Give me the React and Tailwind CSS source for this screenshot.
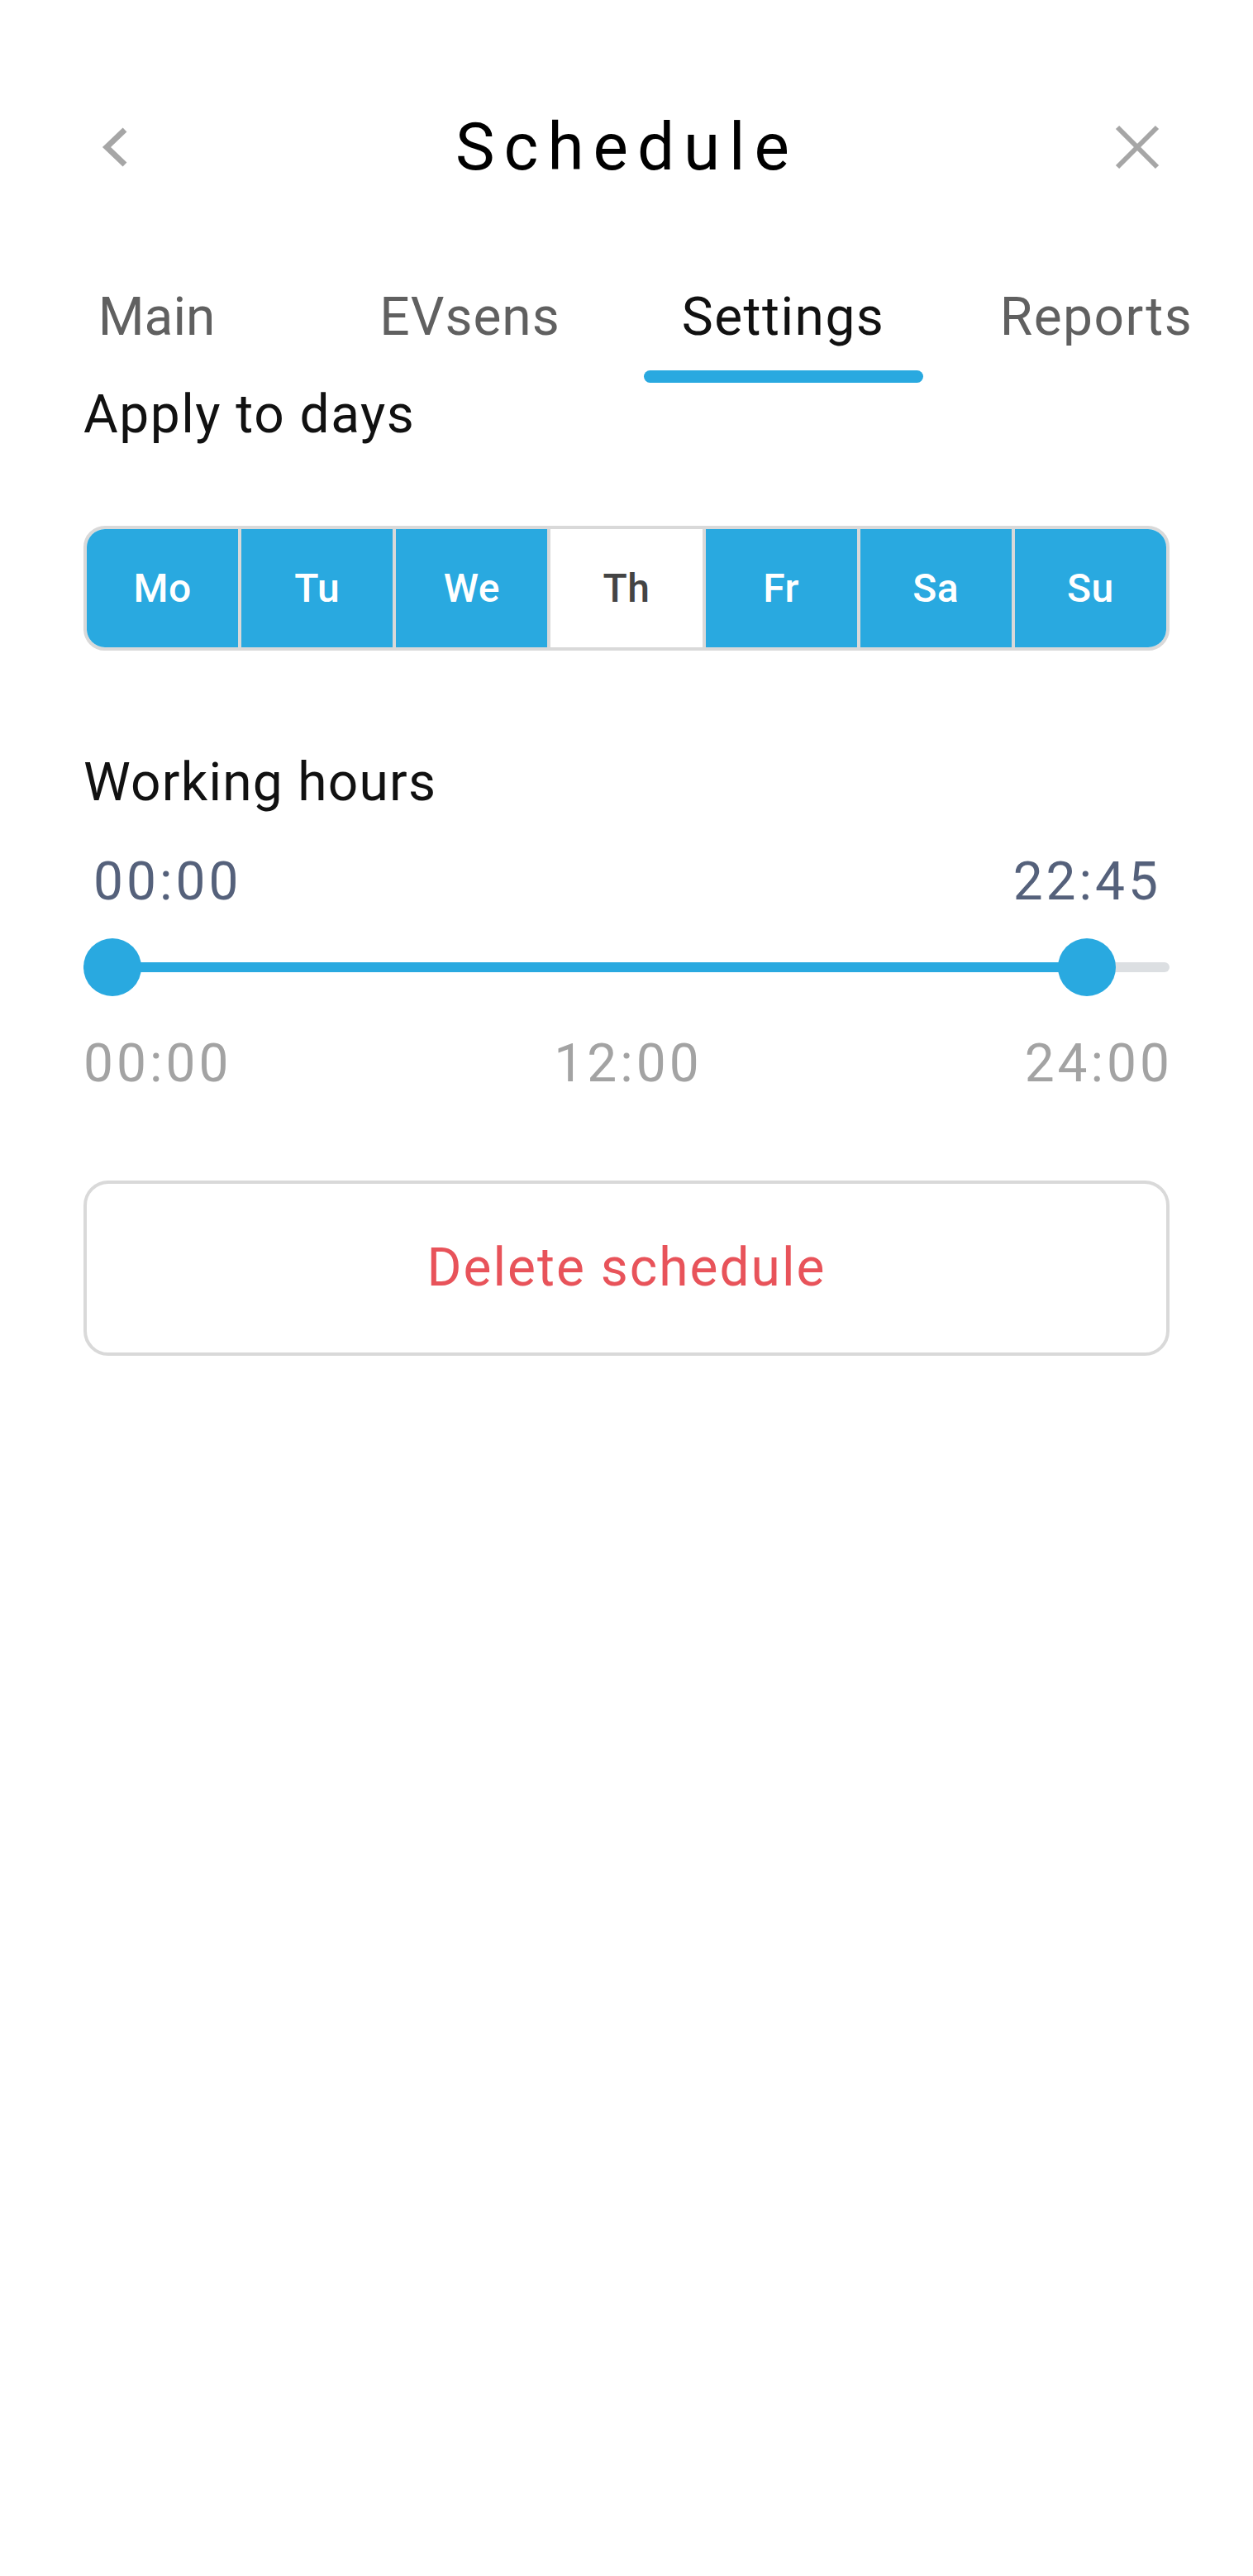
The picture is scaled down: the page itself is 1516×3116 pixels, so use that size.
import React from "react";

const days = [
  { d: "Mo", on: true },
  { d: "Tu", on: true },
  { d: "We", on: true },
  { d: "Th", on: false },
  { d: "Fr", on: true },
  { d: "Sa", on: true },
  { d: "Su", on: true },
];

const tabs = [
  { t: "Main", active: false, cls: "tracking-[0px]" },
  { t: "EVsens", active: false, cls: "tracking-[1px]" },
  { t: "Settings", active: true, cls: "tracking-[1.5px]" },
  { t: "Reports", active: false, cls: "tracking-[1.5px]" },
];

export default function App() {
  return (
    <div
      className="w-[1516px] min-h-[3116px] bg-white"
      style={{ fontFamily: "Roboto, 'Noto Sans', sans-serif" }}
    >
      {/* Header */}
      <div className="mt-[130px] flex h-[96px] items-center pl-[122px] pr-[113px]">
        <div className="flex w-[54px] items-center justify-start">
          <svg width="32" height="48" viewBox="0 0 32 48" fill="none">
            <polyline
              points="29,3 7,24 29,45"
              stroke="#a6a6a6"
              strokeWidth="7"
              strokeLinecap="butt"
              strokeLinejoin="miter"
            />
          </svg>
        </div>
        <div className="flex-1 pr-[8px] text-center text-[80px] font-normal leading-[96px] tracking-[11px] text-black">
          Schedule
        </div>
        <div className="flex w-[54px] items-center justify-end">
          <svg width="54" height="54" viewBox="0 0 54 54" fill="none">
            <line x1="3" y1="3" x2="51" y2="51" stroke="#a6a6a6" strokeWidth="6" />
            <line x1="51" y1="3" x2="3" y2="51" stroke="#a6a6a6" strokeWidth="6" />
          </svg>
        </div>
      </div>

      {/* Tabs */}
      <div className="mt-[120px] flex">
        {tabs.map((tab) => (
          <div key={tab.t} className="flex flex-1 flex-col items-center">
            <div
              className={`text-[64px] leading-[76px] ${tab.cls} ${
                tab.active ? "text-[#111111]" : "text-[#606060]"
              }`}
            >
              {tab.t}
            </div>
            <div
              className={`mt-[26px] h-[15px] w-[338px] rounded-full ${
                tab.active ? "bg-[#29a9e0]" : "bg-transparent"
              }`}
            />
          </div>
        ))}
      </div>

      {/* Content */}
      <div className="px-[101px]">
        <div className="mt-[1px] text-[64px] leading-[76px] tracking-[1.5px] text-[#111111]">
          Apply to days
        </div>

        <div className="mt-[96px] flex h-[151px] divide-x-4 divide-[#d9d9d9] overflow-hidden rounded-[26px] border-4 border-[#d9d9d9]">
          {days.map((day) => (
            <div
              key={day.d}
              className={`flex flex-1 items-center justify-center text-[48px] font-medium tracking-[0.5px] ${
                day.on ? "bg-[#29a9e0] text-white" : "bg-white text-[#444444]"
              }`}
            >
              {day.d}
            </div>
          ))}
        </div>

        <div className="mt-[122px] text-[64px] leading-[76px] tracking-[1.25px] text-[#111111]">
          Working hours
        </div>

        <div className="mt-[44px] flex justify-between pl-[12px] pr-[10px] text-[64px] leading-[76px] tracking-[4px] text-[#55617b]">
          <span>00:00</span>
          <span>22:45</span>
        </div>

        <div className="relative mt-[30px] h-[70px]">
          <div className="absolute left-0 right-0 top-[29px] h-[12px] rounded-full bg-[#dcdfe2]" />
          <div className="absolute left-0 top-[29px] h-[12px] w-[1214px] rounded-full bg-[#29a9e0]" />
          <div className="absolute left-0 top-0 h-[70px] w-[70px] rounded-full bg-[#29a9e0]" />
          <div className="absolute left-[1179px] top-0 h-[70px] w-[70px] rounded-full bg-[#29a9e0]" />
        </div>

        <div className="mt-[44px] -mr-[4px] flex justify-between text-[64px] leading-[76px] tracking-[4px] text-[#a3a3a3]">
          <span>00:00</span>
          <span>12:00</span>
          <span>24:00</span>
        </div>

        <button className="mt-[103px] flex h-[212px] w-full items-center justify-center rounded-[30px] border-4 border-[#d9d9d9] bg-white text-[64px] leading-[76px] tracking-[2px] text-[#e8535a]">
          Delete schedule
        </button>
      </div>
    </div>
  );
}
